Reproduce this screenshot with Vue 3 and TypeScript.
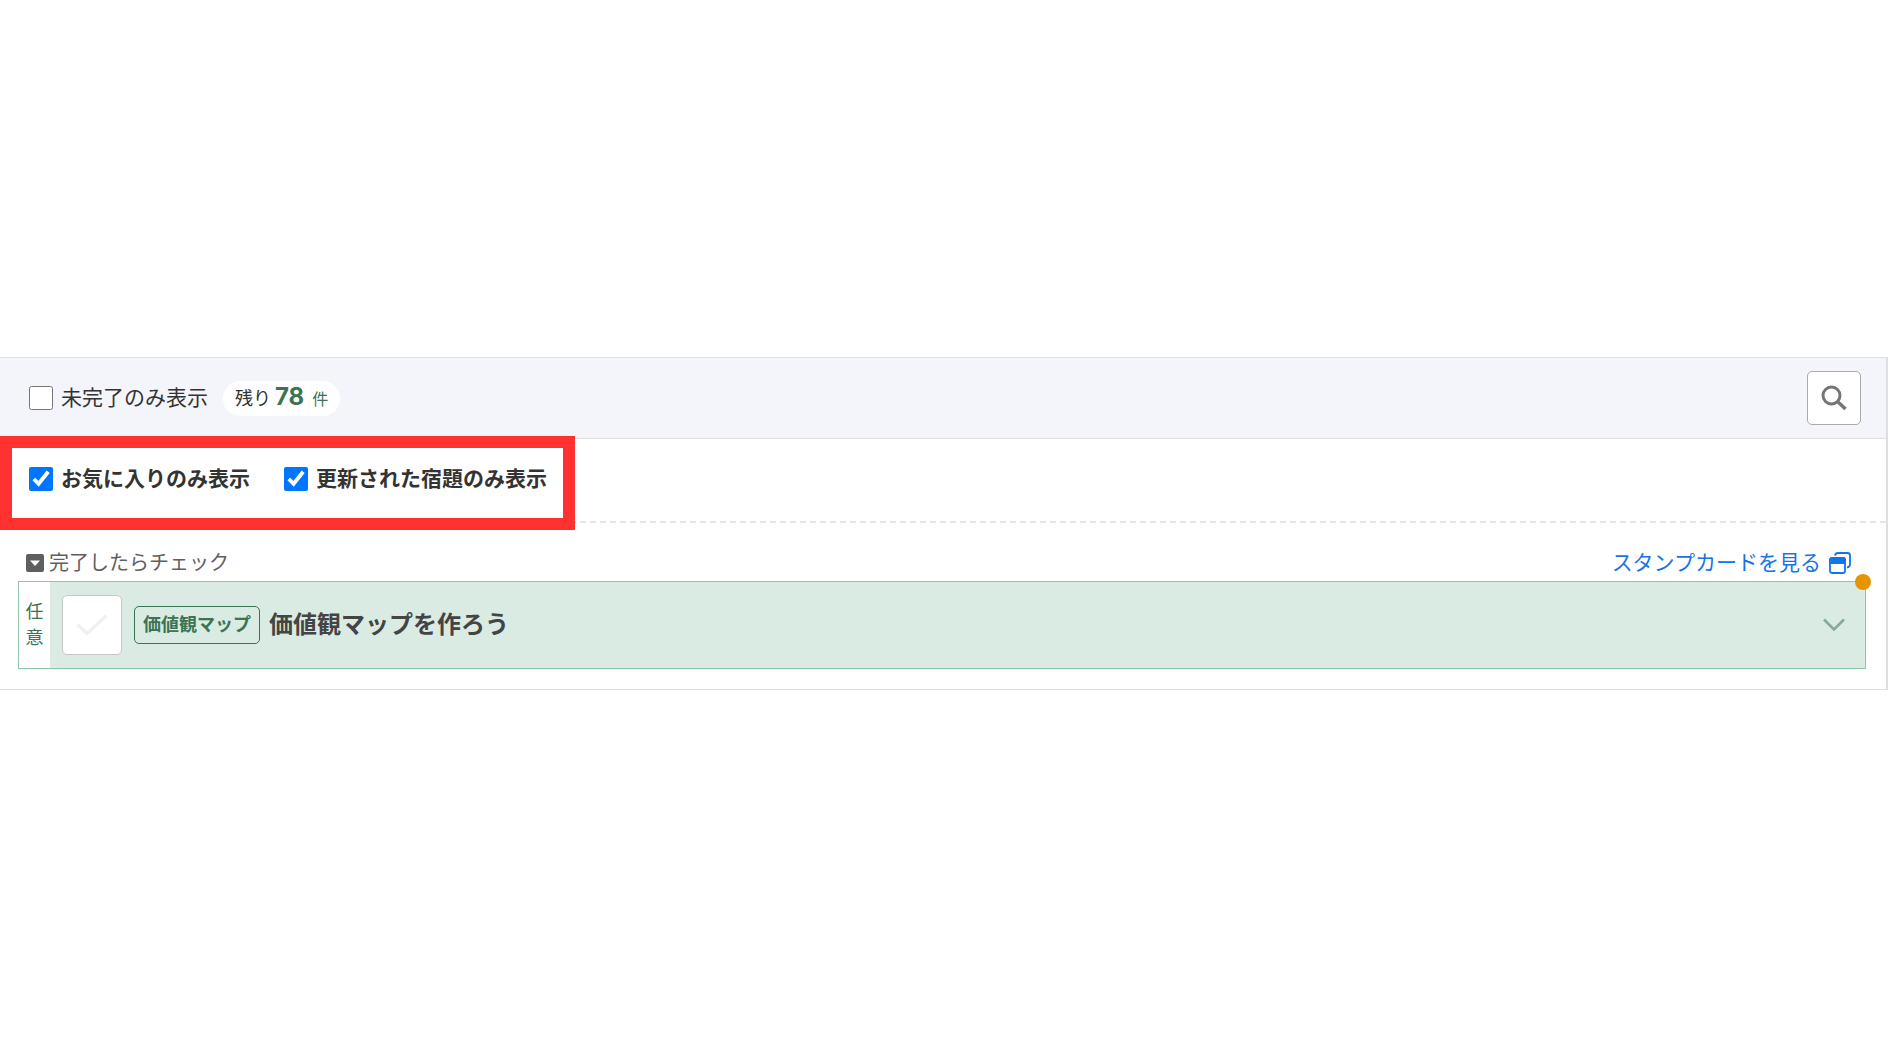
<script setup lang="ts">
import { ref } from 'vue'

interface Filter {
  id: string
  label: string
}

const unfinishedOnly = ref(false)
const remaining = ref(78)
const filters: Filter[] = [
  { id: 'favorite', label: 'お気に入りのみ表示' },
  { id: 'updated', label: '更新された宿題のみ表示' },
]
const active = ref<string[]>(['favorite', 'updated'])
const done = ref(false)
</script>

<template>
  <main class="page">
    <section class="panel">
      <header class="toolbar">
        <label class="option">
          <input v-model="unfinishedOnly" type="checkbox" />
          <span>未完了のみ表示</span>
        </label>
        <p class="count">残り<strong>{{ remaining }}</strong><small>件</small></p>
        <button class="search" type="button" aria-label="検索">
          <svg viewBox="0 0 26 26" width="26" height="26" fill="none" stroke="#757575">
            <circle cx="10.5" cy="10.5" r="8.5" stroke-width="3" />
            <path d="M16.5 16.5 24.5 24" stroke-width="3.4" />
          </svg>
        </button>
      </header>

      <div class="filters">
        <label v-for="f in filters" :key="f.id" class="option bold">
          <input v-model="active" type="checkbox" :value="f.id" />
          <span>{{ f.label }}</span>
        </label>
        <div class="highlight"></div>
      </div>

      <div class="content">
        <div class="caption">
          <p class="hint">
            <svg viewBox="0 0 18 18" width="18" height="18">
              <rect width="18" height="18" rx="2" fill="#5f5f5f" />
              <path d="M4 6.5h10L9 12z" fill="#fff" />
            </svg>
            <span>完了したらチェック</span>
          </p>
          <a class="stamp" href="#">
            <span>スタンプカードを見る</span>
            <svg viewBox="0 0 22 22" width="22" height="22" fill="none" stroke="#1673e8" stroke-width="1.8">
              <path d="M6 3.5Q6.500 1 9 1h9.500Q21 1 21 3.500v9Q21 15 18 15.500" />
              <rect x="1" y="6" width="15" height="15" rx="2" />
              <path d="M1 8q0-2 2-2h11q2 0 2 2v3H1z" fill="#1673e8" />
            </svg>
          </a>
        </div>

        <article class="task">
          <p class="kind"><span>任</span><span>意</span></p>
          <label class="done">
            <input v-model="done" type="checkbox" aria-label="完了" />
            <svg viewBox="0 0 32 22" width="32" height="22" fill="none" stroke="#f0f0f0" stroke-width="3.400">
              <path d="M1.500 10.500 11 19.500 30.500 1.500" />
            </svg>
          </label>
          <span class="tag">価値観マップ</span>
          <h2 class="title">価値観マップを作ろう</h2>
          <button class="expand" type="button" aria-label="開く">
            <svg viewBox="0 0 22 14" width="22" height="14" fill="none" stroke="#87aa98" stroke-width="2.600">
              <path d="M1 1.500 11 11.500 21 1.500" />
            </svg>
          </button>
          <i class="dot"></i>
        </article>
      </div>
    </section>
  </main>
</template>

<style>
body {
  margin: 0;
  background: #fff;
}
</style>

<style scoped>
.page {
  padding: 357px 2px 0 0;
  font-family: "Liberation Sans", "Noto Sans CJK JP", sans-serif;
  font-size: 21px;
  line-height: 24px;
  color: #333;
}

p,
h2 {
  margin: 0;
}

svg {
  display: block;
  flex: none;
}

button {
  display: flex;
  align-items: center;
  justify-content: center;
  padding: 0;
  cursor: pointer;
}

.panel {
  border: 1px solid #dfdfe1;
  border-width: 1px 2px 1px 0;
}

.toolbar {
  display: flex;
  align-items: center;
  height: 80px;
  padding: 0 25px 0 29px;
  background: #f4f5fa;
  border-bottom: 1px solid #dfdfe1;
}

.option {
  display: flex;
  align-items: center;
  gap: 8px;
  cursor: pointer;
}

.option input {
  width: 24px;
  height: 24px;
  margin: 0;
  accent-color: #0075ff;
}

.bold {
  font-weight: 700;
}

.count {
  display: flex;
  align-items: baseline;
  height: 35px;
  margin-left: 15px;
  padding: 0 12px;
  border-radius: 18px;
  background: #fff;
  font-size: 18px;
  line-height: 32px;
}

.count strong {
  margin: 0 8px 0 4px;
  color: #3a7455;
  font-family: Inter, sans-serif;
  font-size: 24px;
}

.count small {
  color: #3a7455;
  font-size: 16px;
}

.search {
  width: 54px;
  height: 54px;
  margin-left: auto;
  border: 1px solid #aaa;
  border-radius: 5px;
  background: #fff;
}

.filters {
  position: relative;
  display: flex;
  gap: 34px;
  padding: 28px 29px 30px;
  border-bottom: 2px dashed #e6e6e6;
}

.highlight {
  position: absolute;
  top: -3px;
  left: 0;
  box-sizing: border-box;
  width: 575px;
  height: 94px;
  border: 12px solid #ff3131;
  pointer-events: none;
}

.content {
  padding: 28px 20px 20px 18px;
}

.caption {
  display: flex;
  justify-content: space-between;
  padding: 0 15px 6px 8px;
}

.hint,
.stamp {
  display: flex;
  align-items: center;
  gap: 5px;
}

.hint {
  color: #5f5f5f;
  font-size: 20px;
}

.stamp {
  gap: 8px;
  color: #1673e8;
  text-decoration: none;
}

.task {
  position: relative;
  display: flex;
  align-items: center;
  border: 1px solid #8fc6aa;
  background: #daebe3;
}

.kind {
  display: flex;
  flex-direction: column;
  align-self: stretch;
  align-items: center;
  justify-content: center;
  width: 31px;
  background: #fff;
  color: #3a7455;
  font-size: 18px;
  line-height: 26px;
}

.done {
  position: relative;
  display: flex;
  align-items: center;
  justify-content: center;
  margin: 13px 12px;
}

.done input {
  appearance: none;
  box-sizing: border-box;
  width: 60px;
  height: 60px;
  margin: 0;
  border: 1px solid #c8c8c8;
  border-radius: 5px;
  background: #fff;
}

.done svg {
  position: absolute;
}

.tag {
  padding: 0 8px;
  border: 1px solid #3a7455;
  border-radius: 5px;
  color: #3a7455;
  font-size: 18px;
  font-weight: 700;
  line-height: 36px;
}

.title {
  margin-left: 9px;
  color: #444;
  font-size: 24px;
}

.expand {
  width: 24px;
  height: 24px;
  margin-left: auto;
  margin-right: 19px;
  border: 0;
  background: none;
}

.dot {
  position: absolute;
  top: -8px;
  right: -6px;
  width: 16px;
  height: 16px;
  border-radius: 50%;
  background: #e69500;
}
</style>
